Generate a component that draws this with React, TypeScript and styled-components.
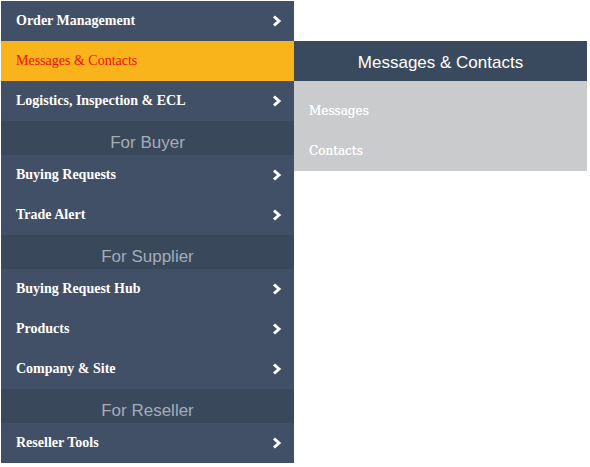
import React from "react";
import styled, { createGlobalStyle } from "styled-components";

const Global = createGlobalStyle`
  html, body { margin: 0; padding: 0; background: #ffffff; }
  body { font-family: "Liberation Sans", Arial, sans-serif; }
`;

const Page = styled.div`
  display: flex;
  align-items: flex-start;
  padding: 1px 0 0 1px;
`;

const Menu = styled.nav`
  width: 293px;
  display: flex;
  flex-direction: column;
  background: #425067;
`;

const Item = styled.div<{ $active?: boolean }>`
  height: 40px;
  display: flex;
  align-items: center;
  justify-content: space-between;
  padding: 0 12px 0 15px;
  background: ${(p) => (p.$active ? "#f9b31b" : "#425067")};
  color: ${(p) => (p.$active ? "#f40f0f" : "#ffffff")};
  font-family: "Liberation Serif", "Times New Roman", serif;
  font-size: 14px;
  font-weight: ${(p) => (p.$active ? 400 : 700)};
`;

const Section = styled.div`
  height: 34px;
  box-sizing: border-box;
  display: flex;
  align-items: flex-end;
  justify-content: center;
  padding-bottom: 2px;
  background: #3a485b;
  color: #a4acb8;
  font-family: "Liberation Sans", Arial, sans-serif;
  font-size: 17px;
`;

const Chevron = () => (
  <svg width="10" height="12" viewBox="0 0 10 12" aria-hidden="true">
    <path d="M2 1.5 L7 6 L2 10.5" fill="none" stroke="#ffffff" strokeWidth="3" strokeLinejoin="miter" />
  </svg>
);

const Flyout = styled.div`
  width: 293px;
  margin-top: 40px;
  display: flex;
  flex-direction: column;
`;

const FlyoutHeader = styled.div`
  height: 40px;
  box-sizing: border-box;
  padding-top: 3px;
  display: flex;
  align-items: center;
  justify-content: center;
  background: #3a4a5e;
  color: #ffffff;
  font-family: "Liberation Sans", Arial, sans-serif;
  font-size: 17px;
`;

const FlyoutBody = styled.div`
  background: #cacbcd;
  padding-top: 10px;
  display: flex;
  flex-direction: column;
`;

const FlyoutItem = styled.div`
  height: 40px;
  display: flex;
  align-items: center;
  padding-left: 15px;
  color: #ffffff;
  font-family: "DejaVu Serif", "Liberation Serif", serif;
  font-size: 12px;
  text-shadow: 0 0 0.4px #ffffff;
`;

type Entry = { kind: "item"; label: string; active?: boolean; arrow?: boolean } | { kind: "section"; label: string };

const entries: Entry[] = [
  { kind: "item", label: "Order Management", arrow: true },
  { kind: "item", label: "Messages & Contacts", active: true },
  { kind: "item", label: "Logistics, Inspection & ECL", arrow: true },
  { kind: "section", label: "For Buyer" },
  { kind: "item", label: "Buying Requests", arrow: true },
  { kind: "item", label: "Trade Alert", arrow: true },
  { kind: "section", label: "For Supplier" },
  { kind: "item", label: "Buying Request Hub", arrow: true },
  { kind: "item", label: "Products", arrow: true },
  { kind: "item", label: "Company & Site", arrow: true },
  { kind: "section", label: "For Reseller" },
  { kind: "item", label: "Reseller Tools", arrow: true },
];

export default function App() {
  return (
    <>
      <Global />
      <Page>
        <Menu>
          {entries.map((e, i) =>
            e.kind === "section" ? (
              <Section key={i}>{e.label}</Section>
            ) : (
              <Item key={i} $active={e.active}>
                <span>{e.label}</span>
                {e.arrow && <Chevron />}
              </Item>
            )
          )}
        </Menu>
        <Flyout>
          <FlyoutHeader>Messages &amp; Contacts</FlyoutHeader>
          <FlyoutBody>
            <FlyoutItem>Messages</FlyoutItem>
            <FlyoutItem>Contacts</FlyoutItem>
          </FlyoutBody>
        </Flyout>
      </Page>
    </>
  );
}
